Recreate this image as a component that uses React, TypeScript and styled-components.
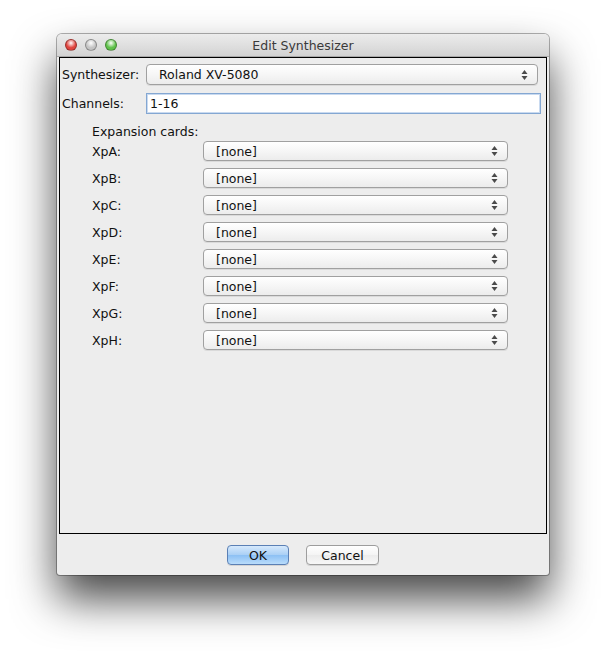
import React from 'react'
import styled, { createGlobalStyle } from 'styled-components'

const GlobalStyle = createGlobalStyle`
  html, body {
    margin: 0;
    padding: 0;
    background: #ffffff;
  }
  body {
    font-family: "DejaVu Sans", "Liberation Sans", sans-serif;
    font-size: 12.5px;
    color: #111;
  }
`

const Page = styled.div`
  width: 606px;
  height: 654px;
  padding: 34px 0 0 57px;
  box-sizing: border-box;
`

const Window = styled.div`
  width: 492px;
  height: 541px;
  display: flex;
  flex-direction: column;
  background: #ededed;
  border-radius: 5px 5px 3px 3px;
  box-shadow: 0 0 0 1px rgba(0, 0, 0, 0.3), 0 24px 44px rgba(0, 0, 0, 0.72);
  overflow: hidden;
`

const TitleBar = styled.div`
  height: 23px;
  flex: none;
  position: relative;
  display: flex;
  align-items: center;
  justify-content: center;
  background: linear-gradient(#ececec, #d3d3d3);
  border-bottom: 1px solid #a8a8a8;
  box-sizing: border-box;
  color: #3a3a3a;
  font-size: 12.5px;
`

const Lights = styled.div`
  position: absolute;
  left: 8px;
  top: 5px;
  display: flex;
  gap: 8px;
`

const Light = styled.span<{ $color: string }>`
  width: 12px;
  height: 12px;
  border-radius: 50%;
  box-sizing: border-box;
  border: 1px solid rgba(0, 0, 0, 0.3);
  background: radial-gradient(circle at 50% 30%, #ffffff 0%, ${(p) => p.$color} 55%);
`

const Body = styled.div`
  flex: 1;
  display: flex;
  flex-direction: column;
  padding: 0 2px;
`

const Panel = styled.div`
  height: 477px;
  box-sizing: border-box;
  border: 1px solid #000;
  padding: 6px 0 0 2px;
  display: flex;
  flex-direction: column;
`

const TopGrid = styled.div`
  display: grid;
  grid-template-columns: 84px 1fr;
  row-gap: 8px;
  align-items: center;
`

const Label = styled.div`
  white-space: nowrap;
`

const Combo = styled.div<{ $right?: number; $height?: number }>`
  height: ${(p) => p.$height ?? 20}px;
  margin-right: ${(p) => p.$right ?? 0}px;
  position: relative;
  display: flex;
  align-items: center;
  padding-left: 12px;
  box-sizing: border-box;
  border: 1px solid #a0a0a0;
  border-radius: 4px;
  background: linear-gradient(#ffffff, #f6f6f6 50%, #ececec);
  box-shadow: 0 1px 0 rgba(0, 0, 0, 0.08);
`

const Arrows = styled.svg`
  position: absolute;
  right: 9px;
  top: 50%;
  transform: translateY(-50%);
`

const TextField = styled.div`
  height: 21px;
  margin-right: 5px;
  display: flex;
  align-items: center;
  padding-left: 3px;
  box-sizing: border-box;
  background: #fff;
  border: 1px solid #84a7d2;
  box-shadow: inset 0 0 0 1px #c9daf0;
`

const Expansion = styled.div`
  padding: 10px 0 0 30px;
  display: flex;
  flex-direction: column;
`

const CardsGrid = styled.div`
  display: grid;
  grid-template-columns: 111px 305px;
  row-gap: 7px;
  align-items: center;
  margin-top: 2px;
`

const Buttons = styled.div`
  flex: 1;
  display: flex;
  justify-content: center;
  align-items: flex-start;
  padding: 11px 0 0 0;
  gap: 17px;
`

const Button = styled.div<{ $primary?: boolean; $width: number }>`
  width: ${(p) => p.$width}px;
  height: 20px;
  display: flex;
  align-items: center;
  justify-content: center;
  box-sizing: border-box;
  border-radius: 4px;
  border: 1px solid ${(p) => (p.$primary ? '#5b80b5' : '#9d9d9d')};
  background: ${(p) =>
    p.$primary
      ? 'linear-gradient(#d6e9fc, #a9cff5 50%, #8cc0f4 51%, #b9dcfb)'
      : 'linear-gradient(#ffffff, #f4f4f4 50%, #ececec 51%, #f7f7f7)'};
  box-shadow: 0 1px 0 rgba(0, 0, 0, 0.1);
`

const ComboArrows = () => (
  <Arrows width="7" height="12" viewBox="0 0 7 12">
    <path d="M3.5 1 L6.5 5 L0.5 5 Z" fill="#4a4a4a" />
    <path d="M3.5 11 L6.5 7 L0.5 7 Z" fill="#4a4a4a" />
  </Arrows>
)

const cards = ['XpA', 'XpB', 'XpC', 'XpD', 'XpE', 'XpF', 'XpG', 'XpH']

const App = () => (
  <>
    <GlobalStyle />
    <Page>
      <Window>
        <TitleBar>
          <Lights>
            <Light $color="#e0443e" />
            <Light $color="#c4c4c4" />
            <Light $color="#5fc24a" />
          </Lights>
          Edit Synthesizer
        </TitleBar>
        <Body>
          <Panel>
            <TopGrid>
              <Label>Synthesizer:</Label>
              <Combo $right={8} $height={21}>
                Roland XV-5080
                <ComboArrows />
              </Combo>
              <Label>Channels:</Label>
              <TextField>1-16</TextField>
            </TopGrid>
            <Expansion>
              <Label>Expansion cards:</Label>
              <CardsGrid>
                {cards.map((c) => (
                  <React.Fragment key={c}>
                    <Label>{c}:</Label>
                    <Combo>
                      [none]
                      <ComboArrows />
                    </Combo>
                  </React.Fragment>
                ))}
              </CardsGrid>
            </Expansion>
          </Panel>
          <Buttons>
            <Button $primary $width={62}>OK</Button>
            <Button $width={73}>Cancel</Button>
          </Buttons>
        </Body>
      </Window>
    </Page>
  </>
)

export default App
